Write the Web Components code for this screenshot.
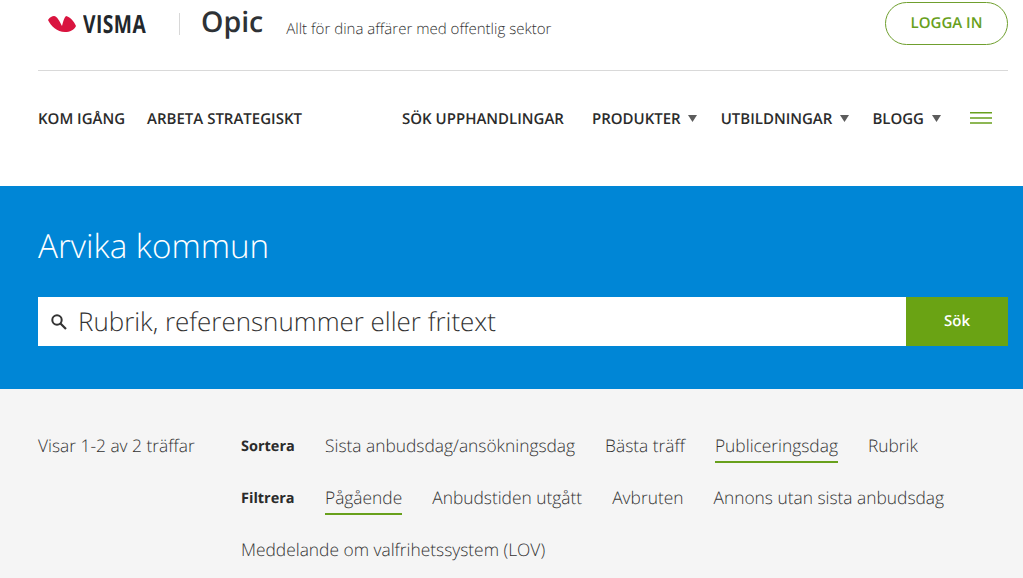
<!DOCTYPE html>
<html lang="sv">
<head>
<meta charset="UTF-8" />
<title>Arvika kommun</title>
<style>
  html, body { margin: 0; padding: 0; height: 578px; overflow: hidden; background: #fff; }
  body { font-family: "Open Sans", sans-serif; color: #333; text-rendering: geometricPrecision; }
</style>
</head>
<body>
<site-header></site-header>
<search-hero heading="Arvika kommun" placeholder="Rubrik, referensnummer eller fritext"></search-hero>
<result-filters></result-filters>
<script>
// top bar: logo row + main navigation
class SiteHeader extends HTMLElement {
  constructor() {
    super();
    this.attachShadow({ mode: 'open' });
    const caret = '<svg class="caret" width="9" height="7" viewBox="0 0 9 7"><path d="M0 0h9L4.500 7z" fill="#5c5c5c"/></svg>';
    this.shadowRoot.innerHTML = `
    <style>
      :host { display: block; height: 186px; padding: 0 15px 0 38px; box-sizing: border-box; background: #fff; }
      .top { height: 70px; display: flex; align-items: flex-start; border-bottom: 1px solid #d9d9d9; box-sizing: content-box; position: relative; }
      .logo { display: flex; align-items: center; margin: 12px 0 0 10px; height: 24px; }
      .wordmark { font: 700 25px/24px "Open Sans", sans-serif; color: #22272b; display: inline-block; width: 66px; margin-left: 7px; transform: scaleX(.77); transform-origin: left center; letter-spacing: .6px; white-space: nowrap; }
      .sep { width: 1px; height: 22px; background: #d8d8d8; margin: 13px 0 0 30px; }
      .opic { font: 600 28.500px/38px "Open Sans", sans-serif; color: #2e3236; margin: 3px 0 0 21px; }
      .tag { font: 300 15.050px/20px "Open Sans", sans-serif; color: #333; margin: 19px 0 0 23px; }
      .login { margin-left: auto; margin-top: 2px; width: 123px; height: 43px; padding-bottom: 1px; border: 1px solid #6f9f2e; border-radius: 22px; display: flex; align-items: center; justify-content: center; font: 600 15px/1 "Open Sans", sans-serif; color: #68a01c; box-sizing: border-box; }
      nav { display: flex; align-items: center; height: 95px; font: 600 15px/20px "Open Sans", sans-serif; color: #2b2b2b; }
      nav span { white-space: nowrap; }
      .left { display: flex; gap: 22px; }
      .right { display: flex; align-items: center; margin-left: auto; margin-right: 16px; }
      .item { display: flex; align-items: center; gap: 7px; }
      .wide { gap: 8px; }
      .caret { display: block; margin-top: -1px; }
      .burger { display: block; margin-left: 29px; margin-top: -1px; }
    </style>
    <div class="top">
      <div class="logo">
        <svg width="28" height="18" viewBox="0 0 28 18"><path d="M0 5C2 2 4 1 6 1 9 1 12 7 14 11 15 7 16 3 18 1 22 2 26 6 28 11 26 15 22 17 17 17 9 17 3 11 0 5Z" fill="#d9143f"/></svg>
        <span class="wordmark">VISMA</span>
      </div>
      <div class="sep"></div>
      <div class="opic">Opic</div>
      <div class="tag">Allt för dina affärer med offentlig sektor</div>
      <div class="login">LOGGA IN</div>
    </div>
    <nav>
      <div class="left"><span>KOM IGÅNG</span><span>ARBETA STRATEGISKT</span></div>
      <div class="right">
        <span style="margin-right:28px">SÖK UPPHANDLINGAR</span>
        <div class="item" style="margin-right:24px"><span>PRODUKTER</span>${caret}</div>
        <div class="item wide" style="margin-right:23px"><span>UTBILDNINGAR</span>${caret}</div>
        <div class="item wide"><span>BLOGG</span>${caret}</div>
        <svg class="burger" width="22" height="12" viewBox="0 0 22 12"><path d="M0 .8h22M0 6h22M0 11h22" stroke="#68a01c" stroke-width="1.500"/></svg>
      </div>
    </nav>`;
  }
}
customElements.define('site-header', SiteHeader);

// blue band with the title and the search field
class SearchHero extends HTMLElement {
  constructor() {
    super();
    this.attachShadow({ mode: 'open' });
    this.shadowRoot.innerHTML = `
    <style>
      :host { display: block; height: 203px; background: #0086d6; padding: 0 15px 0 38px; box-sizing: border-box; overflow: hidden; }
      h1 { margin: 0; padding-top: 36px; height: 111px; box-sizing: border-box; font: 300 33.200px/48px "Open Sans", sans-serif; color: #fff; }
      .bar { display: flex; height: 49px; background: #fff; }
      .field { flex: 1; display: flex; align-items: center; padding: 0 0 0 12px; box-sizing: border-box; font: 300 25.950px/1 "Open Sans", sans-serif; color: #333; }
      .field svg { margin: 0 10px 0 0; }
      .go { width: 102px; background: #6aa314; color: #fff; display: flex; align-items: center; justify-content: center; font: 600 15px/1 "Open Sans", sans-serif; }
    </style>
    <h1></h1>
    <div class="bar">
      <div class="field">
        <svg width="18" height="18" viewBox="0 0 18 18"><circle cx="7" cy="7" r="4.700" fill="none" stroke="#333" stroke-width="2"/><path d="M10.500 10.500 16 16" stroke="#333" stroke-width="2.200"/></svg>
        <span></span>
      </div>
      <div class="go">Sök</div>
    </div>`;
    this.shadowRoot.querySelector('h1').textContent = this.getAttribute('heading');
    this.shadowRoot.querySelector('.field span').textContent = this.getAttribute('placeholder');
  }
}
customElements.define('search-hero', SearchHero);

// one sort/filter link, "active" gets the green underline
class FilterLink extends HTMLElement {
  constructor() {
    super();
    this.attachShadow({ mode: 'open' });
    this.shadowRoot.innerHTML = `
    <style>
      :host { display: inline-block; font: 300 17.370px/24px "Open Sans", sans-serif; color: #333; padding-bottom: 3px; border-bottom: 2px solid transparent; white-space: nowrap; }
      :host([active]) { border-bottom-color: #68a01c; }
    </style>
    <slot></slot>`;
  }
}
customElements.define('filter-link', FilterLink);

// grey area below the search: hit count + sort and filter rows
class ResultFilters extends HTMLElement {
  constructor() {
    super();
    this.attachShadow({ mode: 'open' });
    this.shadowRoot.innerHTML = `
    <style>
      :host { display: flex; height: 189px; background: #f5f5f5; padding: 45px 0 0 38px; box-sizing: border-box; }
      .count { width: 203px; font: 300 17.370px/24px "Open Sans", sans-serif; color: #333; white-space: nowrap; }
      .rows { display: flex; flex-direction: column; gap: 23px; }
      .row { display: flex; align-items: flex-start; height: 29px; }
      b { font: 700 14.500px/24px "Open Sans", sans-serif; color: #2b2b2b; width: 84px; padding-top: 1px; }
      .links { display: flex; gap: 30px; }
    </style>
    <div class="count">Visar 1-2 av 2 träffar</div>
    <div class="rows">
      <div class="row"><b>Sortera</b><div class="links">
        <filter-link>Sista anbudsdag/ansökningsdag</filter-link>
        <filter-link>Bästa träff</filter-link>
        <filter-link active>Publiceringsdag</filter-link>
        <filter-link>Rubrik</filter-link>
      </div></div>
      <div class="row"><b>Filtrera</b><div class="links">
        <filter-link active>Pågående</filter-link>
        <filter-link>Anbudstiden utgått</filter-link>
        <filter-link>Avbruten</filter-link>
        <filter-link>Annons utan sista anbudsdag</filter-link>
      </div></div>
      <div class="row"><filter-link>Meddelande om valfrihetssystem (LOV)</filter-link></div>
    </div>`;
  }
}
customElements.define('result-filters', ResultFilters);
</script>
</body>
</html>
